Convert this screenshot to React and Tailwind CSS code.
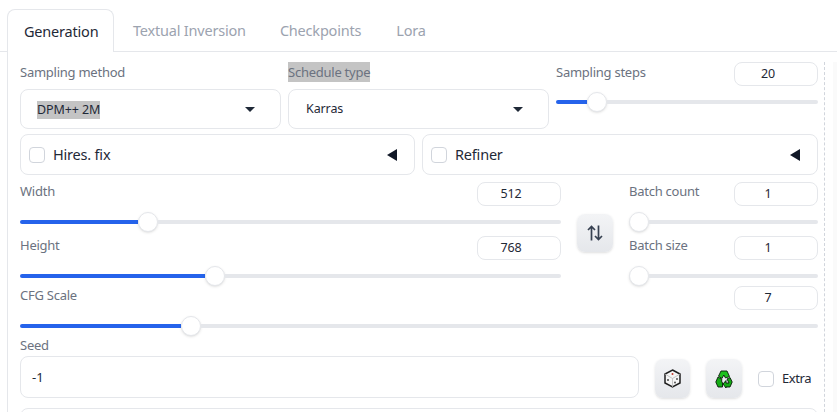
const font = { fontFamily: '"Noto Sans", sans-serif' };

function Label({ children, className = "leading-[18px]" }) {
  return <span className={"block text-[13px] tracking-[-0.25px] text-[#6b7280] " + className}>{children}</span>;
}

function NumberBox({ value }) {
  return (
    <div className="w-[84px] h-6 shrink-0 border border-gray-200 rounded-lg flex items-center justify-center pr-4 text-[12.5px] tracking-[-0.2px] text-[#1f2937] bg-white">
      {value}
    </div>
  );
}

function Slider({ fill, width }) {
  return (
    <div className="flex items-center h-5 mt-1.5" style={{ width }}>
      {fill > 0 && <div className="h-1 bg-[#2563eb] rounded-l-full" style={{ width: fill }} />}
      <div className="w-5 h-5 shrink-0 rounded-full bg-white border border-gray-200 shadow-sm" />
      <div className="h-1 flex-1 bg-[#e5e7eb] rounded-r-full" />
    </div>
  );
}

function SliderRow({ label, value, fill, width, labelClass }) {
  return (
    <div>
      <div className="flex justify-between items-start h-6">
        <Label className={labelClass}>{label}</Label>
        <NumberBox value={value} />
      </div>
      <Slider fill={fill} width={width} />
    </div>
  );
}

function Dropdown({ children }) {
  return (
    <div className="h-10 w-[261px] border border-gray-200 rounded-lg flex items-center justify-between pl-4 pr-[25px] text-[12.5px] tracking-[-0.1px] text-[#1f2937]">
      {children}
      <svg width="10" height="5" viewBox="0 0 10 5">
        <polygon points="0,0 10,0 5,5" fill="#1f2937" />
      </svg>
    </div>
  );
}

function Accordion({ label, className }) {
  return (
    <div className={"h-[41px] border border-gray-200 rounded-lg flex items-center justify-between pl-2 pr-4 " + className}>
      <div className="flex items-center gap-2">
        <div className="w-4 h-4 border border-gray-300 rounded bg-white" />
        <span className="text-[14.5px] tracking-[-0.2px] text-[#1f2937]">{label}</span>
      </div>
      <svg width="11" height="12" viewBox="0 0 11 12">
        <polygon points="0,6 10,0 10,12" fill="#111827" />
      </svg>
    </div>
  );
}

function IconButton({ children, className = "" }) {
  return (
    <div className={"flex items-center justify-center rounded-lg bg-gradient-to-b from-[#f3f4f6] to-[#e5e7eb] shadow-sm " + className}>
      {children}
    </div>
  );
}

function Tab({ children, className }) {
  return <div className={"text-[14.5px] tracking-[-0.2px] text-[#9ca3af] pt-[11px] " + className}>{children}</div>;
}

export default function App() {
  return (
    <div className="w-[837px] h-[412px] overflow-hidden bg-white pt-[9px]" style={font}>
      <div className="flex h-[43px] border-b border-gray-200 pl-[7px]">
        <div className="w-[107px] h-[43px] border border-b-0 border-gray-200 rounded-t-lg bg-white text-[14.5px] tracking-[-0.2px] text-[#1f2937] pl-4 pt-[11px]">
          Generation
        </div>
        <Tab className="ml-[19px]">Textual Inversion</Tab>
        <Tab className="ml-[34px]">Checkpoints</Tab>
        <Tab className="ml-[35px]">Lora</Tab>
      </div>

      <div className="flex ml-[7px] border-l border-gray-200 h-[360px]">
        <div className="w-[798px] ml-3 pt-[10px] shrink-0">
          <div className="flex gap-[7px]">
            <div className="flex flex-col items-start">
              <div className="h-[27px]"><Label className="leading-5">Sampling method</Label></div>
              <Dropdown><span className="bg-[#c4c4c4] leading-[18px] mt-px">DPM++ 2M</span></Dropdown>
            </div>
            <div className="flex flex-col items-start">
              <div className="h-[27px]"><Label className="leading-5 bg-[#c4c4c4]">Schedule type</Label></div>
              <Dropdown><span className="mt-px ml-px">Karras</span></Dropdown>
            </div>
            <div className="flex-1">
              <SliderRow label="Sampling steps" value="20" fill={31} width={262} labelClass="leading-5" />
            </div>
          </div>

          <div className="flex gap-[7px] mt-[5px]">
            <Accordion label="Hires. fix" className="w-[395px]" />
            <Accordion label="Refiner" className="w-[396px]" />
          </div>

          <div className="flex mt-[7px]">
            <div className="w-[541px] flex flex-col">
              <div className="mb-1"><SliderRow label="Width" value="512" fill={118} width={541} /></div>
              <SliderRow label="Height" value="768" fill={185} width={541} />
            </div>
            <IconButton className="w-9 h-[38px] ml-4 mt-8 shrink-0">
              <svg width="16" height="16" viewBox="0 0 16 16" fill="none" stroke="#374151" strokeWidth="1.7">
                <path d="M4.500 15.500V1.500M1 5l3.500-3.500L8 5" />
                <path d="M11.500 .5v14M8 11l3.500 3.500L15 11" />
              </svg>
            </IconButton>
            <div className="w-[189px] ml-4 flex flex-col">
              <div className="mb-1"><SliderRow label="Batch count" value="1" fill={0} width={189} /></div>
              <SliderRow label="Batch size" value="1" fill={0} width={189} />
            </div>
          </div>

          <SliderRow label="CFG Scale" value="7" fill={161} width={798} />

          <Label className="leading-[18px] mb-[2px]">Seed</Label>
          <div className="flex items-center h-[42px]">
            <div className="w-[619px] h-[42px] border border-gray-200 rounded-lg flex items-center pl-[11px] pt-px text-[13px] text-[#1f2937]">-1</div>
            <IconButton className="w-[35px] h-[39px] ml-4 mt-[3px]">
              <svg width="17" height="19" viewBox="0 0 17 19">
                <polygon points="8.500,1 16,5 16,14 8.500,18 1,14 1,5" fill="#f5f5f5" stroke="#1f1f1f" strokeWidth="1.5" />
                <path d="M1 5l7.500 4.500L16 5M8.500 9.500V18" fill="none" stroke="#b9b9b9" strokeWidth="0.8" />
                <circle cx="8.500" cy="5" r="1" fill="#c0392b" />
                <circle cx="4" cy="11" r="1" fill="#444" />
                <circle cx="13" cy="10" r="0.9" fill="#444" />
                <circle cx="11" cy="13.500" r="0.9" fill="#444" />
              </svg>
            </IconButton>
            <IconButton className="w-9 h-[39px] ml-4 mt-[3px]">
              <svg width="18" height="18" viewBox="0 0 18 18" stroke="#0a1a0a" strokeWidth="0.9" strokeLinejoin="round">
                <polygon points="6,1 12,1 14.500,6.500 10.500,8 8.800,5 7,8.500 3.500,6.200" fill="#1cc01c" />
                <polygon points="3,7 7,9.500 6.500,11 7.500,13 7.500,17 3,17 .8,12" fill="#14ac14" />
                <polygon points="12,9 15,7.500 17.200,12 15,17 11,17 11,18 8,14 11,10.500 11,13 14,13" fill="#14ac14" />
              </svg>
            </IconButton>
            <div className="w-4 h-4 ml-4 mt-[3px] border border-gray-300 rounded bg-white" />
            <span className="ml-2 mt-[3px] text-[13px] tracking-[-0.4px] text-[#1f2937]">Extra</span>
          </div>
          <div className="h-10 mt-2.5 border border-gray-200 rounded-lg" />
        </div>
        <div className="h-full ml-[6px] border-l border-dashed border-gray-300 mt-[10px]" />
        <div className="h-full ml-2 flex-1 mt-[10px] bg-[#fafafa]" />
      </div>
    </div>
  );
}
